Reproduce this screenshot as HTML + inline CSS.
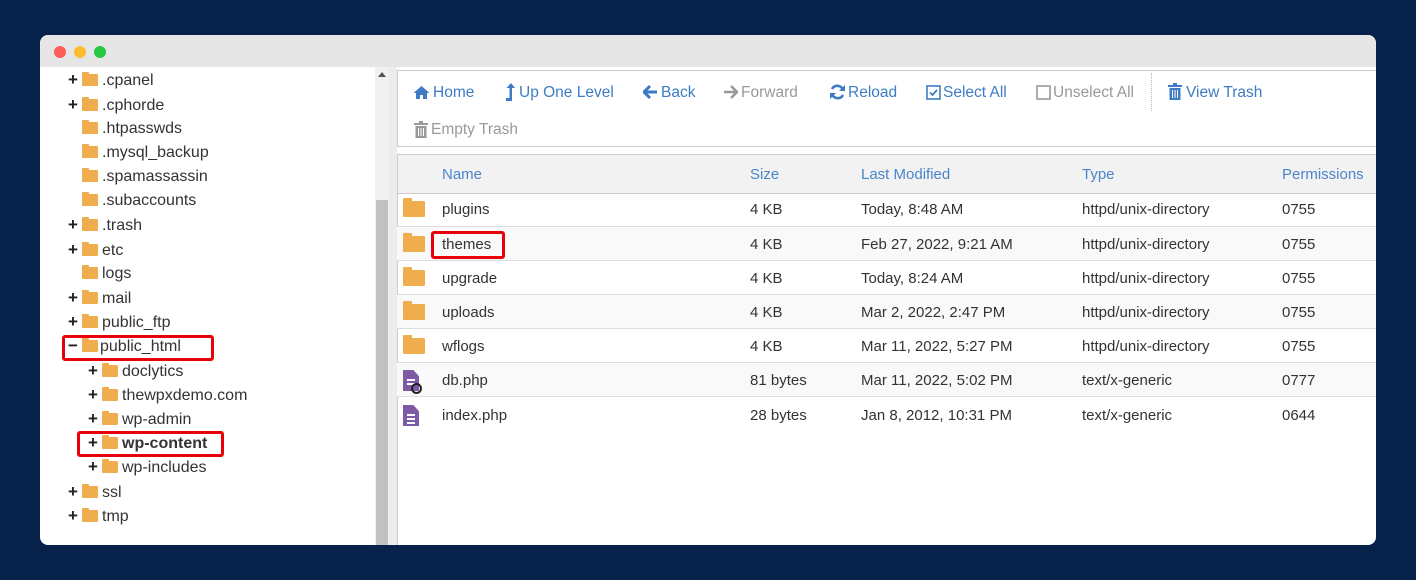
<!DOCTYPE html>
<html><head><style>
body{margin:0;width:1416px;height:580px;background:#06224b;position:relative;overflow:hidden;font-family:"Liberation Sans","DejaVu Sans",sans-serif}
.win{position:absolute;left:40px;top:35px;width:1336px;height:510px;background:#fff;border-radius:8px;overflow:hidden}
.tb{position:absolute;left:0;top:0;width:100%;height:32px;background:#e6e6e6}
.dot{position:absolute;top:11px;width:12px;height:12px;border-radius:50%}
.t{position:absolute;font-size:16px;color:#333;white-space:nowrap;line-height:18px}
.f{display:inline-block;width:16px;height:12px;background:#f0ad4e;position:relative;vertical-align:-1px;margin-right:4px;border-radius:1px}
.f:before{content:"";position:absolute;left:0;top:-2px;width:7px;height:3px;background:#f0ad4e;border-radius:1px 1px 0 0}
.pl{display:inline-block;width:14px;font-weight:bold;font-size:17px;color:#222}
.red{position:absolute;border:3px solid #e8000b;border-radius:3px}
.tx{position:absolute;font-size:15.5px;color:#3d7cc4;white-space:nowrap;top:49px;line-height:18px}
.ic{position:absolute}
.g{color:#999}
.hd{position:absolute;font-size:15px;color:#4a86c8;top:131px}
.row{position:absolute;left:357px;width:979px;height:34px;border-top:1px solid #ddd}
.c{position:absolute;font-size:15px;color:#333;top:9px;white-space:nowrap}
.bf{position:absolute;left:6px;top:9px;width:22px;height:16px;background:#f0ad4e;border-radius:1px}
.bf:before{content:"";position:absolute;left:0;top:-3px;width:9px;height:4px;background:#f0ad4e;border-radius:1px}
.doc{position:absolute;left:6px;top:7px;width:16px;height:21px;background:#7d5aa3;clip-path:polygon(0 0,65% 0,100% 30%,100% 100%,0 100%)}
.doc i{position:absolute;left:4px;width:8px;height:2px;background:#fff}
</style></head><body>
<div class="win">
<div class="tb"></div>
<div class="dot" style="left:14px;background:#fe5f57"></div>
<div class="dot" style="left:34px;background:#febc2e"></div>
<div class="dot" style="left:54px;background:#28c840"></div>

<div class="t" style="left:28px;top:36px"><span class="pl">+</span><span class="f"></span>.cpanel</div>
<div class="t" style="left:28px;top:61px"><span class="pl">+</span><span class="f"></span>.cphorde</div>
<div class="t" style="left:28px;top:85px"><span class="pl"></span><span class="f"></span>.htpasswds</div>
<div class="t" style="left:28px;top:109px"><span class="pl"></span><span class="f"></span>.mysql_backup</div>
<div class="t" style="left:28px;top:133px"><span class="pl"></span><span class="f"></span>.spamassassin</div>
<div class="t" style="left:28px;top:157px"><span class="pl"></span><span class="f"></span>.subaccounts</div>
<div class="t" style="left:28px;top:181px"><span class="pl">+</span><span class="f"></span>.trash</div>
<div class="t" style="left:28px;top:206px"><span class="pl">+</span><span class="f"></span>etc</div>
<div class="t" style="left:28px;top:230px"><span class="pl"></span><span class="f"></span>logs</div>
<div class="t" style="left:28px;top:254px"><span class="pl">+</span><span class="f"></span>mail</div>
<div class="t" style="left:28px;top:278px"><span class="pl">+</span><span class="f"></span>public_ftp</div>
<div class="t" style="left:28px;top:302px"><span class="pl">−</span><span class="f" style="margin-right:2px"></span>public_html</div>
<div class="t" style="left:48px;top:327px"><span class="pl">+</span><span class="f"></span>doclytics</div>
<div class="t" style="left:48px;top:351px"><span class="pl">+</span><span class="f"></span>thewpxdemo.com</div>
<div class="t" style="left:48px;top:375px"><span class="pl">+</span><span class="f"></span>wp-admin</div>
<div class="t" style="left:48px;top:399px;font-weight:bold"><span class="pl">+</span><span class="f"></span>wp-content</div>
<div class="t" style="left:48px;top:423px"><span class="pl">+</span><span class="f"></span>wp-includes</div>
<div class="t" style="left:28px;top:448px"><span class="pl">+</span><span class="f"></span>ssl</div>
<div class="t" style="left:28px;top:472px"><span class="pl">+</span><span class="f"></span>tmp</div>
<div class="red" style="left:22px;top:300px;width:146px;height:20px"></div>
<div class="red" style="left:37px;top:396px;width:141px;height:20px"></div>

<div style="position:absolute;left:335px;top:32px;width:14px;height:478px;background:#f1f1f1"></div>
<div style="position:absolute;left:338px;top:37px;width:0;height:0;border:4px solid transparent;border-bottom:5px solid #555;border-top:0"></div>
<div style="position:absolute;left:336px;top:165px;width:12px;height:345px;background:#c1c1c1"></div>
<div style="position:absolute;left:349px;top:32px;width:8px;height:478px;background:#ececec"></div>

<div style="position:absolute;left:357px;top:35px;width:979px;height:77px;border:1px solid #ccc;border-right:0;box-sizing:border-box;background:#fff"></div>

<svg class="ic" style="left:373px;top:50px" width="17" height="15" viewBox="0 0 17 15"><path d="M8.5 1L0.5 8h2.5v6h4v-4h3v4h4V8h2.5z" fill="#3d7cc4"/></svg>
<div class="tx" style="left:393px">Home</div>
<svg class="ic" style="left:465px;top:48px" width="11" height="18" viewBox="0 0 11 18"><path d="M6 0L1.5 5h3v10H1v3h6V5h3z" fill="#3d7cc4"/></svg>
<div class="tx" style="left:479px">Up One Level</div>
<svg class="ic" style="left:603px;top:50px" width="15" height="14" viewBox="0 0 15 14"><path d="M7 1L1 7l6 6M1 7h13" stroke="#3d7cc4" stroke-width="3" fill="none"/></svg>
<div class="tx" style="left:621px">Back</div>
<svg class="ic" style="left:683px;top:50px" width="15" height="14" viewBox="0 0 15 14"><path d="M8 1l6 6-6 6M14 7H1" stroke="#999" stroke-width="2.6" fill="none"/></svg>
<div class="tx g" style="left:701px">Forward</div>
<svg class="ic" style="left:789px;top:49px" width="17" height="16" viewBox="0 0 17 16"><path d="M14 6A6 6 0 0 0 3 5M3 10a6 6 0 0 0 11 1" stroke="#3d7cc4" stroke-width="2.6" fill="none"/><path d="M16 1v6h-6zM1 15V9h6z" fill="#3d7cc4"/></svg>
<div class="tx" style="left:808px">Reload</div>
<svg class="ic" style="left:886px;top:50px" width="15" height="15" viewBox="0 0 15 15"><rect x="1" y="1" width="13" height="13" fill="none" stroke="#3d7cc4" stroke-width="1.6"/><path d="M4 7.5l2.5 2.5L11 5" stroke="#3d7cc4" stroke-width="1.8" fill="none"/></svg>
<div class="tx" style="left:903px">Select All</div>
<svg class="ic" style="left:996px;top:50px" width="15" height="15" viewBox="0 0 15 15"><rect x="1" y="1" width="13" height="13" fill="none" stroke="#999" stroke-width="1.6"/></svg>
<div class="tx g" style="left:1013px">Unselect All</div>
<div style="position:absolute;left:1111px;top:38px;height:38px;border-left:1px dotted #bbb"></div>
<svg class="ic" style="left:1128px;top:48px" width="14" height="17" viewBox="0 0 14 17"><path d="M5 0h4v2h5v2H0V2h5zM1.5 5h11v12h-11z" fill="#3d7cc4"/><path d="M4.5 7v8M7 7v8M9.5 7v8" stroke="#fff" stroke-width="1"/></svg>
<div class="tx" style="left:1146px">View Trash</div>
<svg class="ic" style="left:374px;top:86px" width="14" height="17" viewBox="0 0 14 17"><path d="M5 0h4v2h5v2H0V2h5zM1.5 5h11v12h-11z" fill="#999"/><path d="M4.5 7v8M7 7v8M9.5 7v8" stroke="#fff" stroke-width="1"/></svg>
<div class="tx g" style="left:391px;top:86px">Empty Trash</div>

<div style="position:absolute;left:357px;top:119px;width:979px;height:38px;background:#f2f2f2;border-top:1px solid #ccc;border-bottom:1px solid #ccc;border-left:1px solid #ccc"></div>
<div class="hd" style="left:402px">Name</div>
<div class="hd" style="left:710px">Size</div>
<div class="hd" style="left:821px">Last Modified</div>
<div class="hd" style="left:1042px">Type</div>
<div class="hd" style="left:1242px">Permissions</div>
<div style="position:absolute;left:357px;top:157px;width:1px;height:353px;background:#ccc"></div>

<div class="row" style="top:157px;border-top:0"><div class="bf"></div><div class="c" style="left:45px">plugins</div><div class="c" style="left:353px">4 KB</div><div class="c" style="left:464px">Today, 8:48 AM</div><div class="c" style="left:685px">httpd/unix-directory</div><div class="c" style="left:885px">0755</div></div>
<div class="row" style="top:191px;background:#f9f9f9"><div class="bf"></div><div class="c" style="left:45px">themes</div><div class="c" style="left:353px">4 KB</div><div class="c" style="left:464px">Feb 27, 2022, 9:21 AM</div><div class="c" style="left:685px">httpd/unix-directory</div><div class="c" style="left:885px">0755</div></div>
<div class="row" style="top:225px"><div class="bf"></div><div class="c" style="left:45px">upgrade</div><div class="c" style="left:353px">4 KB</div><div class="c" style="left:464px">Today, 8:24 AM</div><div class="c" style="left:685px">httpd/unix-directory</div><div class="c" style="left:885px">0755</div></div>
<div class="row" style="top:259px;background:#f9f9f9"><div class="bf"></div><div class="c" style="left:45px">uploads</div><div class="c" style="left:353px">4 KB</div><div class="c" style="left:464px">Mar 2, 2022, 2:47 PM</div><div class="c" style="left:685px">httpd/unix-directory</div><div class="c" style="left:885px">0755</div></div>
<div class="row" style="top:293px"><div class="bf"></div><div class="c" style="left:45px">wflogs</div><div class="c" style="left:353px">4 KB</div><div class="c" style="left:464px">Mar 11, 2022, 5:27 PM</div><div class="c" style="left:685px">httpd/unix-directory</div><div class="c" style="left:885px">0755</div></div>
<div class="row" style="top:327px;background:#f9f9f9"><div class="doc"><i style="top:9px"></i><i style="top:13px"></i></div><div style="position:absolute;left:14px;top:20px;width:7px;height:7px;border:2px solid #222;border-radius:50%"></div><div class="c" style="left:45px">db.php</div><div class="c" style="left:353px">81 bytes</div><div class="c" style="left:464px">Mar 11, 2022, 5:02 PM</div><div class="c" style="left:685px">text/x-generic</div><div class="c" style="left:885px">0777</div></div>
<div class="row" style="top:361px;height:36px"><div class="doc" style="top:8px"><i style="top:9px"></i><i style="top:13px"></i><i style="top:17px"></i></div><div class="c" style="left:45px;top:10px">index.php</div><div class="c" style="left:353px;top:10px">28 bytes</div><div class="c" style="left:464px;top:10px">Jan 8, 2012, 10:31 PM</div><div class="c" style="left:685px;top:10px">text/x-generic</div><div class="c" style="left:885px;top:10px">0644</div></div>

<div class="red" style="left:391px;top:196px;width:68px;height:22px"></div>
</div>
</body></html>
